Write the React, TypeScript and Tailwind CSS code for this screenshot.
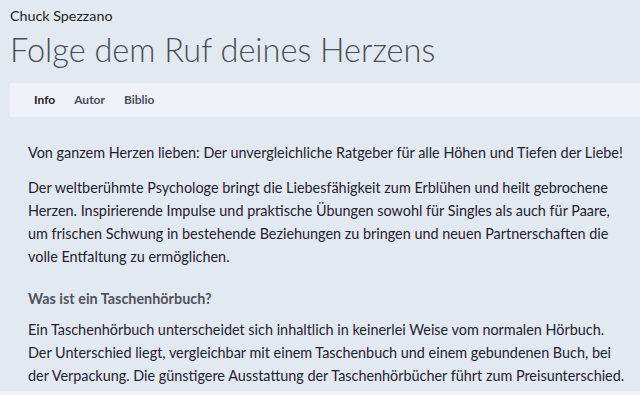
export default function App() {
  return (
    <div
      className="min-h-[395px] w-[640px] overflow-hidden bg-[#e3e9f1] text-[#1f2230]"
      style={{ fontFamily: 'Lato, "Noto Sans", sans-serif' }}
    >
      <div className="px-[10px] pt-[6px]">
        <div className="text-[14.3px] leading-[20px] text-[#222]">Chuck Spezzano</div>
        <h1 className="mt-[4px] text-[32.5px] font-light leading-[40px] text-[#4a4d55]">
          Folge dem Ruf deines Herzens
        </h1>
      </div>

      <nav className="ml-[10px] mt-[13px] flex h-[34px] items-center gap-[19px] bg-[#eff2f8] pl-[24px] text-[12px] font-bold">
        <span className="text-[#1b1d26]">Info</span>
        <span className="text-[#4b4f5c]">Autor</span>
        <span className="text-[#4b4f5c]">Biblio</span>
      </nav>

      <div className="whitespace-nowrap px-[28px] pt-[24px] text-[14.4px] leading-[23px]">
        <p>Von ganzem Herzen lieben: Der unvergleichliche Ratgeber für alle Höhen und Tiefen der Liebe!</p>
        <p className="mt-[12px]">
          Der weltberühmte Psychologe bringt die Liebesfähigkeit zum Erblühen und heilt gebrochene
          <br />
          Herzen. Inspirierende Impulse und praktische Übungen sowohl für Singles als auch für Paare,
          <br />
          um frischen Schwung in bestehende Beziehungen zu bringen und neuen Partnerschaften die
          <br />
          volle Entfaltung zu ermöglichen.
        </p>
        <h2 className="mt-[19px] font-bold text-[#50535c]">Was ist ein Taschenhörbuch?</h2>
        <p className="mt-[8px]">
          Ein Taschenhörbuch unterscheidet sich inhaltlich in keinerlei Weise vom normalen Hörbuch.
          <br />
          Der Unterschied liegt, vergleichbar mit einem Taschenbuch und einem gebundenen Buch, bei
          <br />
          der Verpackung. Die günstigere Ausstattung der Taschenhörbücher führt zum Preisunterschied.
        </p>
      </div>
      <div className="mt-[4px] h-[10px] bg-[#eff2f8]" />
    </div>
  )
}
